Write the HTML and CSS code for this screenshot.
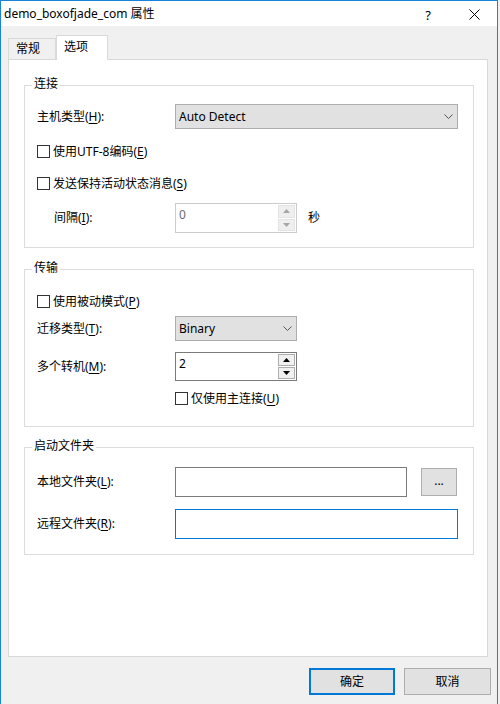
FILE: index.html
```html
<!DOCTYPE html>
<html lang="zh-CN">
<head>
<meta charset="utf-8">
<title>demo_boxofjade_com 属性</title>
<link rel="stylesheet" href="styles.css">
</head>
<body>
<div class="window">
  <div class="titlebar">
    <span class="title">demo_boxofjade_com 属性</span>
    <span class="tb-btn help">?</span>
    <span class="tb-btn close"><svg width="11" height="11" viewBox="0 0 11 11"><path d="M0.5 0.5L10.5 10.5M10.5 0.5L0.5 10.5" stroke="#000" stroke-width="1" fill="none"/></svg></span>
  </div>

  <div class="tabs">
    <div class="tab">常规</div>
    <div class="tab active">选项</div>
  </div>

  <div class="panel">
    <div class="group g1">
      <div class="group-title">连接</div>
      <div class="row host-row">
        <span class="lbl">主机类型(<u>H</u>):</span>
        <div class="combo combo-wide"><span class="combo-text">Auto Detect</span><svg class="chev" width="9" height="5" viewBox="0 0 9 5"><path d="M0.5 0.5L4.5 4.5L8.5 0.5" stroke="#555" fill="none"/></svg></div>
      </div>
      <div class="row check-row r-utf">
        <span class="cb"></span><span>使用UTF-8编码(<u>E</u>)</span>
      </div>
      <div class="row check-row r-keep">
        <span class="cb"></span><span>发送保持活动状态消息(<u>S</u>)</span>
      </div>
      <div class="row spin-row r-interval">
        <span class="lbl lbl-indent">间隔(<u>I</u>):</span>
        <div class="spin spin-disabled">
          <span class="spin-text">0</span>
          <div class="spin-btns">
            <span class="sb"><svg width="7" height="4" viewBox="0 0 7 4"><path d="M0 4L3.5 0L7 4Z" fill="#a6a6a6"/></svg></span>
            <span class="sb"><svg width="7" height="4" viewBox="0 0 7 4"><path d="M0 0L3.5 4L7 0Z" fill="#a6a6a6"/></svg></span>
          </div>
        </div>
        <span class="unit">秒</span>
      </div>
    </div>

    <div class="group g2">
      <div class="group-title">传输</div>
      <div class="row check-row r-passive">
        <span class="cb"></span><span>使用被动模式(<u>P</u>)</span>
      </div>
      <div class="row combo-row r-type">
        <span class="lbl">迁移类型(<u>T</u>):</span>
        <div class="combo combo-small"><span class="combo-text">Binary</span><svg class="chev" width="9" height="5" viewBox="0 0 9 5"><path d="M0.5 0.5L4.5 4.5L8.5 0.5" stroke="#555" fill="none"/></svg></div>
      </div>
      <div class="row spin-row r-multi">
        <span class="lbl">多个转机(<u>M</u>):</span>
        <div class="spin spin-enabled">
          <span class="spin-text">2</span>
          <div class="spin-btns">
            <span class="sb"><svg width="7" height="4" viewBox="0 0 7 4"><path d="M0 4L3.5 0L7 4Z" fill="#000"/></svg></span>
            <span class="sb"><svg width="7" height="4" viewBox="0 0 7 4"><path d="M0 0L3.5 4L7 0Z" fill="#000"/></svg></span>
          </div>
        </div>
      </div>
      <div class="row check-row r-main">
        <span class="cb"></span><span>仅使用主连接(<u>U</u>)</span>
      </div>
    </div>

    <div class="group g3">
      <div class="group-title">启动文件夹</div>
      <div class="row text-row r-local">
        <span class="lbl">本地文件夹(<u>L</u>):</span>
        <div class="textbox tb-local"></div>
        <div class="browse">...</div>
      </div>
      <div class="row text-row r-remote">
        <span class="lbl">远程文件夹(<u>R</u>):</span>
        <div class="textbox tb-remote focused"></div>
      </div>
    </div>
  </div>

  <div class="footer">
    <div class="btn btn-default">确定</div>
    <div class="btn">取消</div>
  </div>
</div>
</body>
</html>
```

FILE: styles.css
```css
* { box-sizing: border-box; }

html, body {
  margin: 0;
  padding: 0;
  background: #f0f0f0;
}

body {
  width: 500px;
  height: 704px;
  overflow: hidden;
  font-family: "Noto Sans", "Noto Sans CJK SC", sans-serif;
  font-size: 12px;
  color: #000;
}

u { text-decoration-thickness: 1px; text-underline-offset: 2px; }

.window {
  width: 498px;
  height: 704px;
  border: 1px solid #1a82d8;
  border-bottom: none;
  background: #f0f0f0;
}

.titlebar {
  height: 25px;
  background: #fff;
  display: flex;
  align-items: center;
}

.title {
  flex: 1;
  padding-left: 3px;
  font-size: 12px;
  line-height: 16px;
}

.tb-btn {
  width: 46px;
  height: 25px;
  display: flex;
  align-items: center;
  justify-content: center;
}

.help {
  font-size: 13px;
  font-family: "Noto Sans", sans-serif;
  padding-top: 2px;
}

.close svg { display: block; margin-top: 2px; }

.tabs {
  display: flex;
  align-items: flex-end;
  height: 24px;
  margin: 9px 0 0 7px;
}

.tab {
  height: 21px;
  width: 48px;
  border: 1px solid #d9d9d9;
  border-bottom: none;
  background: #f0f0f0;
  padding-left: 7px;
  line-height: 19px;
}

.tab.active {
  position: relative;
  z-index: 1;
  height: 25px;
  width: 52px;
  margin-bottom: -1px;
  background: #fff;
  padding-left: 7px;
  padding-top: 2px;
  line-height: 18px;
}

.panel {
  margin-left: 7px;
  width: 480px;
  height: 598px;
  border: 1px solid #d9d9d9;
  background: #fff;
  padding-top: 25px;
}

.group {
  border: 1px solid #dcdcdc;
  margin: 0 13px 0 15px;
  padding-left: 12px;
}

.g1 { padding-bottom: 14px; }
.g2 { margin-top: 21px; padding-bottom: 18px; }
.g3 { margin-top: 20px; padding-bottom: 15px; }

.group-title {
  margin: -10px 0 0 -5px;
  height: 16px;
  line-height: 16px;
  padding: 0 2px;
  background: #fff;
  width: fit-content;
}

.row {
  display: flex;
  align-items: center;
}

.lbl {
  width: 138px;
  flex: none;
  line-height: 16px;
}

.lbl-indent {
  margin-left: 17px;
  width: 121px;
}

.host-row { margin-top: 12px; height: 25px; }

.check-row { height: 20px; }
.r-utf { margin-top: 12px; }
.r-keep { margin-top: 12px; }
.r-passive { margin-top: 15px; }
.r-main { margin-top: 7px; padding-left: 138px; }

.cb {
  width: 13px;
  height: 13px;
  border: 1px solid #333;
  background: #fff;
  margin-right: 3px;
  flex: none;
}

.combo {
  height: 25px;
  background: #e1e1e1;
  border: 1px solid #adadad;
  display: flex;
  align-items: center;
  padding: 0 4px 0 3px;
}

.combo-wide { width: 283px; }
.combo-small { width: 122px; }

.combo-text { flex: 1; line-height: 16px; }

.chev { display: block; flex: none; }

.r-interval { margin-top: 10px; height: 30px; }
.r-type { margin-top: 5px; height: 25px; }
.r-multi { margin-top: 11px; height: 29px; }

.spin {
  width: 122px;
  display: flex;
  background: #fff;
  padding: 1px 1px 1px 3px;
}

.spin-disabled {
  height: 30px;
  border: 1px solid #cccccc;
}

.spin-enabled {
  height: 29px;
  border: 1px solid #7a7a7a;
}

.spin-text {
  flex: 1;
  line-height: 16px;
  padding-top: 2px;
}

.spin-disabled .spin-text { color: #6d6d6d; }

.spin-btns {
  width: 17px;
  display: flex;
  flex-direction: column;
  gap: 1px;
}

.sb {
  flex: 1;
  display: flex;
  align-items: center;
  justify-content: center;
}

.spin-disabled .sb {
  background: #efefef;
  border: 1px solid #e3e3e3;
}

.spin-enabled .sb {
  background: #f0f0f0;
  border: 1px solid #adadad;
}

.sb svg { display: block; }

.unit {
  margin-left: 11px;
  line-height: 16px;
}

.text-row { height: 30px; }
.r-local { margin-top: 13px; }
.r-remote { margin-top: 12px; }

.textbox {
  height: 30px;
  background: #fff;
  border: 1px solid #7a7a7a;
}

.tb-local { width: 232px; }
.tb-remote { width: 283px; }

.textbox.focused { border-color: #0078d7; }

.browse {
  margin-left: 14px;
  width: 36px;
  height: 28px;
  background: #e1e1e1;
  border: 1px solid #adadad;
  display: flex;
  align-items: center;
  justify-content: center;
  line-height: 16px;
  padding-bottom: 3px;
}

.footer {
  display: flex;
  justify-content: flex-end;
  gap: 9px;
  margin-top: 11px;
  padding-right: 6px;
}

.btn {
  width: 87px;
  height: 27px;
  background: #e1e1e1;
  border: 1px solid #adadad;
  display: flex;
  align-items: center;
  justify-content: center;
  line-height: 16px;
}

.btn-default {
  width: 86px;
  border: 2px solid #0078d7;
}
```
